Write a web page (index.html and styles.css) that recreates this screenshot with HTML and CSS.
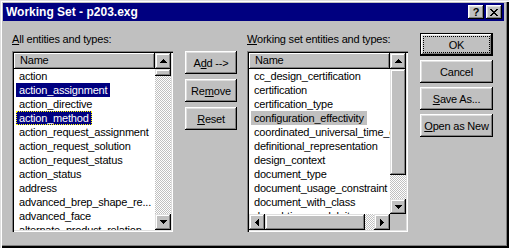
FILE: index.html
```html
<!doctype html>
<html lang="en">
  <head>
    <meta charset="UTF-8" />
    <title>Working Set - p203.exg</title>
    <link rel="stylesheet" href="styles.css">
  </head>
  <body>
    <div class="window">
      <div class="titlebar">
        <span class="title">Working Set - p203.exg</span>
        <div class="title-buttons">
          <span class="tbtn help">?</span>
          <span class="tbtn">
            <svg width="8" height="7" viewBox="0 0 8 7"><path d="M0 0h2v1h-2zM6 0h2v1h-2zM1 1h2v1h-2zM5 1h2v1h-2zM2 2h4v1h-4zM3 3h2v1h-2zM2 4h4v1h-4zM1 5h2v1h-2zM5 5h2v1h-2zM0 6h2v1h-2zM6 6h2v1h-2z"/></svg>
          </span>
        </div>
      </div>

      <div class="dialog-body">
        <!-- all entities -->
        <div class="list-col">
          <div class="field-label"><u>A</u>ll entities and types:</div>
          <div class="listbox">
            <div class="list-main">
              <div class="list-header">Name</div>
              <ul class="items">
                <li><span>action</span></li>
                <li class="sel"><span>action_assignment</span></li>
                <li><span>action_directive</span></li>
                <li class="sel focus"><span>action_method</span></li>
                <li><span>action_request_assignment</span></li>
                <li><span>action_request_solution</span></li>
                <li><span>action_request_status</span></li>
                <li><span>action_status</span></li>
                <li><span>address</span></li>
                <li><span>advanced_brep_shape_re...</span></li>
                <li><span>advanced_face</span></li>
                <li><span>alternate_product_relation...</span></li>
              </ul>
            </div>
            <div class="vscroll">
              <div class="sbtn"><svg width="7" height="4" viewBox="0 0 7 4"><path d="M3 0h1v1h-1zM2 1h3v1h-3zM1 2h5v1h-5zM0 3h7v1h-7z"/></svg></div>
              <div class="thumb small"></div>
              <div class="track"></div>
              <div class="sbtn"><svg width="7" height="4" viewBox="0 0 7 4"><path d="M0 0h7v1h-7zM1 1h5v1h-5zM2 2h3v1h-3zM3 3h1v1h-1z"/></svg></div>
            </div>
          </div>
        </div>

        <!-- move buttons -->
        <div class="mid-col">
          <div class="btn">A<u>d</u>d --&gt;</div>
          <div class="btn">Re<u>m</u>ove</div>
          <div class="btn"><u>R</u>eset</div>
        </div>

        <!-- working set -->
        <div class="list-col working">
          <div class="field-label"><u>W</u>orking set entities and types:</div>
          <div class="listbox">
            <div class="list-main">
              <div class="list-header">Name</div>
              <ul class="items">
                <li><span>cc_design_certification</span></li>
                <li><span>certification</span></li>
                <li><span>certification_type</span></li>
                <li class="inactive"><span>configuration_effectivity</span></li>
                <li><span>coordinated_universal_time_offset</span></li>
                <li><span>definitional_representation</span></li>
                <li><span>design_context</span></li>
                <li><span>document_type</span></li>
                <li><span>document_usage_constraint</span></li>
                <li><span>document_with_class</span></li>
                <li><span>draughting_model_item_association</span></li>
              </ul>
              <div class="hscroll">
                <div class="sbtn"><svg width="4" height="7" viewBox="0 0 4 7"><path d="M3 0h1v7h-1zM2 1h1v5h-1zM1 2h1v3h-1zM0 3h1v1h-1z"/></svg></div>
                <div class="thumb wide"></div>
                <div class="track"></div>
                <div class="sbtn"><svg width="4" height="7" viewBox="0 0 4 7"><path d="M0 0h1v7h-1zM1 1h1v5h-1zM2 2h1v3h-1zM3 3h1v1h-1z"/></svg></div>
              </div>
            </div>
            <div class="vscroll">
              <div class="sbtn"><svg width="7" height="4" viewBox="0 0 7 4"><path d="M3 0h1v1h-1zM2 1h3v1h-3zM1 2h5v1h-5zM0 3h7v1h-7z"/></svg></div>
              <div class="thumb tall"></div>
              <div class="track"></div>
              <div class="sbtn short"><svg width="7" height="4" viewBox="0 0 7 4"><path d="M0 0h7v1h-7zM1 1h5v1h-5zM2 2h3v1h-3zM3 3h1v1h-1z"/></svg></div>
              <div class="corner"></div>
            </div>
          </div>
        </div>

        <!-- dialog buttons -->
        <div class="side-col">
          <div class="btn default">OK</div>
          <div class="btn">Cancel</div>
          <div class="btn"><u>S</u>ave As...</div>
          <div class="btn"><u>O</u>pen as New</div>
        </div>
      </div>
    </div>
  </body>
</html>
```
FILE: styles.css
```css
:root {
  --face: #c0c0c0;
  --light: #dfdfdf;
  --shadow: #808080;
  --navy: #000080;
}

* {
  box-sizing: border-box;
  margin: 0;
  padding: 0;
}

body {
  font-family: "Liberation Sans", Arial, sans-serif;
  font-size: 11px;
  letter-spacing: -0.2px;
  color: #000;
  background: var(--face);
}

.window {
  width: 509px;
  height: 248px;
  padding: 3px 5px 3px 3px;
  background: var(--face);
  box-shadow: inset 1px 1px var(--light), inset 2px 2px #fff,
    inset -2px -2px #000, inset -3px -3px var(--shadow);
}

/* title bar */
.titlebar {
  height: 18px;
  background: var(--navy);
  color: #fff;
  display: flex;
  align-items: center;
  justify-content: space-between;
  padding: 0 2px 0 3px;
}

.title {
  font-weight: bold;
  font-size: 12px;
  letter-spacing: 0;
}

.title-buttons {
  display: flex;
  gap: 2px;
}

.tbtn {
  width: 16px;
  height: 14px;
  display: flex;
  align-items: center;
  justify-content: center;
  background: var(--face);
  color: #000;
  font-weight: bold;
  font-size: 11px;
  box-shadow: inset -1px -1px #000, inset 1px 1px #fff,
    inset -2px -2px var(--shadow), inset 2px 2px var(--light);
}

/* layout */
.dialog-body {
  display: flex;
  padding: 12px 0 0 9px;
}

.list-col {
  width: 161px;
  display: flex;
  flex-direction: column;
}

.list-col.working {
  margin-left: 10px;
}

.field-label {
  height: 13px;
  line-height: 13px;
  margin-bottom: 5px;
  white-space: nowrap;
}

.mid-col {
  width: 52px;
  margin-left: 12px;
  padding-top: 18px;
  display: flex;
  flex-direction: column;
  gap: 5px;
}

.side-col {
  width: 73px;
  margin-left: 12px;
  display: flex;
  flex-direction: column;
  gap: 4px;
}

/* push buttons */
.btn {
  height: 23px;
  display: flex;
  align-items: center;
  justify-content: center;
  background: var(--face);
  white-space: nowrap;
  box-shadow: inset -1px -1px #000, inset 1px 1px #fff,
    inset -2px -2px var(--shadow), inset 2px 2px var(--light);
}

.btn.default {
  border: 1px solid #000;
  outline: 1px dotted #000;
  outline-offset: -4px;
}

/* list boxes */
.listbox {
  height: 181px;
  display: flex;
  padding: 2px;
  background: #fff;
  box-shadow: inset 1px 1px var(--shadow), inset 2px 2px #000,
    inset -1px -1px #fff, inset -2px -2px var(--light);
}

.list-main {
  flex: 1;
  min-width: 0;
  display: flex;
  flex-direction: column;
  overflow: hidden;
}

.list-header {
  height: 16px;
  line-height: 15px;
  padding-left: 6px;
  flex: none;
  background: var(--face);
  box-shadow: inset -1px -1px #000, inset 1px 1px #fff,
    inset -2px -2px var(--shadow);
}

.items {
  flex: 1;
  list-style: none;
  overflow: hidden;
  padding-left: 2px;
}

.items li {
  height: 14px;
  line-height: 14px;
  white-space: nowrap;
}

.items span {
  display: inline-block;
  height: 14px;
  padding: 0 3px;
}

.items .sel span {
  background: var(--navy);
  color: #fff;
}

.items .focus span {
  outline: 1px dotted #ff0;
  outline-offset: -1px;
}

.items .inactive span {
  background: var(--face);
}

/* scroll bars */
.vscroll {
  width: 16px;
  flex: none;
  display: flex;
  flex-direction: column;
}

.hscroll {
  height: 16px;
  flex: none;
  display: flex;
}

.sbtn {
  width: 16px;
  height: 16px;
  flex: none;
  display: flex;
  align-items: center;
  justify-content: center;
  background: var(--face);
  box-shadow: inset -1px -1px #000, inset 1px 1px var(--light),
    inset -2px -2px var(--shadow), inset 2px 2px #fff;
}

.sbtn.short {
  height: 15px;
}

.sbtn svg {
  display: block;
}

.thumb {
  flex: none;
  background: var(--face);
  box-shadow: inset -1px -1px #000, inset 1px 1px var(--light),
    inset -2px -2px var(--shadow), inset 2px 2px #fff;
}

.thumb.small {
  height: 7px;
}

.thumb.tall {
  height: 106px;
}

.thumb.wide {
  width: 100px;
}

.track {
  flex: 1;
  background: repeating-conic-gradient(var(--face) 0 25%, #fff 0 50%) 0 0 / 2px 2px;
}

.corner {
  height: 16px;
  flex: none;
  background: var(--face);
}
```
